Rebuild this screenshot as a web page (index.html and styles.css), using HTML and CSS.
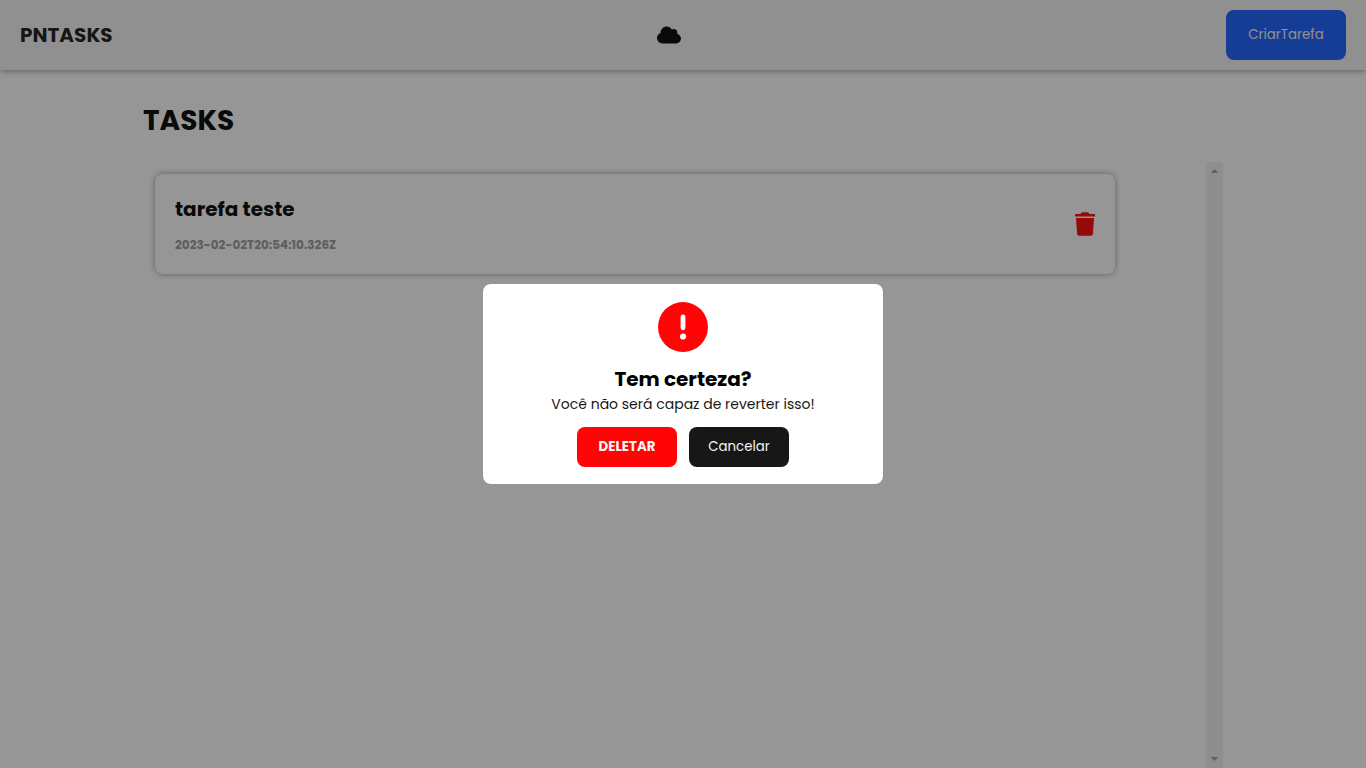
FILE: index.html
```html
<!DOCTYPE html>
<html lang="pt-BR">
<head>
<meta charset="utf-8">
<title>PNTASKS</title>
<link rel="stylesheet" href="styles.css">
</head>
<body>
<div class="app">
  <header class="header">
    <span class="brand">PNTASKS</span>
    <svg class="cloud" viewBox="0 0 640 512" aria-hidden="true"><path d="M0 336c0 79.500 64.500 144 144 144H512c70.700 0 128-57.300 128-128c0-61.900-44-113.600-102.400-125.400c4.100-10.700 6.400-22.400 6.400-34.600c0-53-43-96-96-96c-19.700 0-38.100 6-53.300 16.200C367 64.200 315.300 32 256 32C167.600 32 96 103.600 96 192c0 2.700 .1 5.400 .2 8.100C40.200 219.800 0 273.200 0 336z"/></svg>
    <button class="button create" type="button">CriarTarefa</button>
  </header>
  <main class="main">
    <h1 class="title">TASKS</h1>
    <div class="scroller">
      <ul class="tasks">
        <li class="task">
          <div class="task-text">
            <h2 class="task-name">tarefa teste</h2>
            <time class="task-date">2023-02-02T20:54:10.326Z</time>
          </div>
          <button class="delete" type="button" aria-label="Deletar tarefa">
            <svg class="trash" viewBox="0 0 20 24" aria-hidden="true"><path d="M0 2.700Q0 2 .7 2H5.500L6.300 1Q6.700 .3 7.300 .3H12.700Q13.300 .3 13.700 1L14.500 2H19.300Q20 2 20 2.700V4.600H0ZM1 6H19L17.900 22Q17.800 23.700 16 23.700H4Q2.200 23.700 2.100 22Z"/></svg>
          </button>
        </li>
      </ul>
      <div class="track" aria-hidden="true">
        <svg class="arrow" viewBox="0 0 7 4"><path d="M3 0H4V1H5V2H6V3H7V4H0V3H1V2H2V1H3Z"/></svg>
        <svg class="arrow" viewBox="0 0 7 4"><path d="M0 0H7V1H6V2H5V3H4V4H3V3H2V2H1V1H0Z"/></svg>
      </div>
    </div>
  </main>
</div>
<div class="overlay">
  <section class="modal" role="alertdialog" aria-modal="true" aria-labelledby="modal-title" aria-describedby="modal-text">
    <svg class="alert" viewBox="0 0 50 50" aria-hidden="true"><circle cx="25" cy="25" r="25" fill="#ff0505"/><rect x="22.600" y="12.500" width="4.800" height="15.700" rx="2.400" fill="#fff"/><circle cx="25" cy="34.500" r="3.100" fill="#fff"/></svg>
    <h2 class="modal-title" id="modal-title">Tem certeza?</h2>
    <p class="modal-text" id="modal-text">Você não será capaz de reverter isso!</p>
    <div class="actions">
      <button class="button confirm" type="button">DELETAR</button>
      <button class="button cancel" type="button">Cancelar</button>
    </div>
  </section>
</div>
</body>
</html>
```
FILE: styles.css
```css
* {
  box-sizing: border-box;
  margin: 0;
  padding: 0;
}

body {
  background: #fff;
  color: #000;
  font-family: Poppins, Inter, "Open Sans", sans-serif;
}

.app {
  display: flex;
  flex-direction: column;
  height: 100vh;
  overflow: hidden;
}

.header {
  display: flex;
  justify-content: space-between;
  align-items: center;
  height: 70px;
  flex: none;
  padding: 0 20px;
  background: #f5f5f5;
  box-shadow: 0 1px 6px rgba(0, 0, 0, 0.4);
}

.brand {
  color: #171717;
  font-size: 20px;
  font-weight: 700;
}

.cloud {
  width: 24px;
  height: 20px;
}

.button {
  border: 0;
  border-radius: 8px;
  color: #f5f5f5;
  font-family: inherit;
  cursor: pointer;
}

.create {
  width: 120px;
  height: 50px;
  background: #175dff;
}

.main {
  display: flex;
  flex: 1;
  flex-direction: column;
  width: 100%;
  max-width: 1080px;
  min-height: 0;
  margin: 0 auto;
  padding-top: 30px;
}

.title {
  margin-bottom: 20px;
  font-size: 28px;
  line-height: 42px;
}

.scroller {
  display: flex;
  flex: 1;
  justify-content: space-between;
  min-height: 0;
}

.tasks {
  flex: 1;
  max-width: 984px;
  padding: 12px;
  list-style: none;
}

.task {
  display: flex;
  align-items: center;
  justify-content: space-between;
  padding: 20px;
  border-radius: 8px;
  box-shadow: 0 0 6px rgba(0, 0, 0, 0.4);
}

.task-text {
  display: flex;
  flex-direction: column;
  gap: 12px;
}

.task-name {
  font-size: 20px;
  line-height: 30px;
}

.task-date {
  color: #999;
  font-size: 12px;
  font-weight: 700;
  line-height: 18px;
}

.delete {
  display: flex;
  border: 0;
  background: none;
  cursor: pointer;
}

.trash {
  width: 20px;
  height: 24px;
  fill: #f00;
}

.track {
  display: flex;
  flex-direction: column;
  align-items: center;
  justify-content: space-between;
  width: 17px;
  padding: 7px 0;
  background: #f1f1f1;
}

.arrow {
  width: 7px;
  height: 4px;
  fill: #a3a3a3;
}

.overlay {
  position: fixed;
  inset: 0;
  display: flex;
  align-items: center;
  justify-content: center;
  background: rgba(23, 23, 23, 0.45);
}

.modal {
  display: flex;
  flex-direction: column;
  align-items: center;
  width: 400px;
  max-width: 100%;
  padding: 18px 18px 17px;
  border-radius: 8px;
  background: #fff;
}

.alert {
  width: 50px;
  height: 50px;
}

.modal-title {
  margin-top: 12px;
  font-size: 20px;
  line-height: 30px;
}

.modal-text {
  margin-bottom: 13px;
  color: #171717;
  font-size: 14px;
  line-height: 20px;
}

.actions {
  display: flex;
  gap: 12px;
}

.actions .button {
  width: 100px;
  height: 40px;
}

.confirm {
  background: #ff0505;
  font-weight: 700;
}

.cancel {
  background: #171717;
}
```
